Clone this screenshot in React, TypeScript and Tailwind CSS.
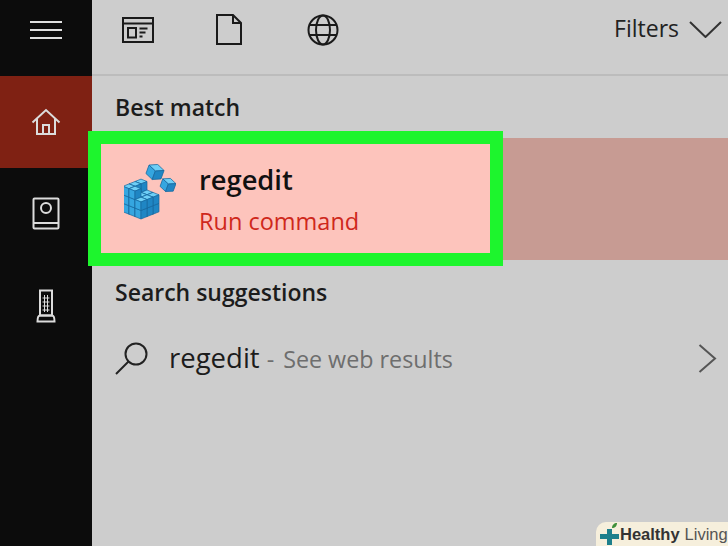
const segoe = { fontFamily: '"Open Sans", "Noto Sans", sans-serif' };

const blockCubes = (() => {
  const out: { i: number; j: number; k: number }[] = [];
  for (let sum = 4; sum >= 0; sum--) {
    for (let i = 2; i >= 0; i--) {
      const j = sum - i;
      if (j < 0 || j > 2) continue;
      for (let k = 0; k < 3; k++) {
        if (k === 2 && j < 2 && i !== 0) continue;
        if (k === 2 && i === 0 && j === 0) continue;
        out.push({ i, j, k });
      }
    }
  }
  return out;
})();

const Cube = ({ x, y, a, b, h }: { x: number; y: number; a: number; b: number; h: number }) => (
  <g stroke="#17689f" strokeWidth="0.7" strokeLinejoin="round">
    <polygon points={`${x},${y - h} ${x + a},${y - h - b} ${x},${y - h - 2 * b} ${x - a},${y - h - b}`} fill="#6ecff6" />
    <polygon points={`${x},${y} ${x},${y - h} ${x - a},${y - h - b} ${x - a},${y - b}`} fill="#35a6e0" />
    <polygon points={`${x},${y} ${x},${y - h} ${x + a},${y - h - b} ${x + a},${y - b}`} fill="#1f86c4" />
  </g>
);

const RegistryIcon = () => (
  <svg width="52" height="56" viewBox="0 0 52 56">
    {blockCubes.map(({ i, j, k }) => (
      <Cube key={`${i}-${j}-${k}`} x={17 + (i - j) * 6} y={55 - (i + j) * 2.4 - k * 8.5} a={6} b={2.4} h={8.5} />
    ))}
    <g transform="rotate(20 31 8)">
      <Cube x={31} y={16} a={8} b={3.5} h={9} />
    </g>
    <g transform="rotate(20 44 21)">
      <Cube x={44} y={28} a={7} b={3} h={8} />
    </g>
  </svg>
);

const App = () => (
  <div className="relative flex h-[546px] w-[728px] overflow-hidden bg-[#cdcdcd]" style={segoe}>
    <aside className="flex w-[92px] shrink-0 flex-col bg-[#0c0c0c] text-[#dcdcdc]">
      <div className="flex h-[76px] items-start justify-center pt-[21px]">
        <div className="flex w-[32px] flex-col gap-[6px]">
          <div className="h-[2px] bg-[#e0e0e0]" />
          <div className="h-[2px] bg-[#e0e0e0]" />
          <div className="h-[2px] bg-[#e0e0e0]" />
        </div>
      </div>
      <div className="flex h-[92px] items-center justify-center bg-[#7f2113]">
        <svg width="30" height="30" viewBox="0 0 30 30" fill="none" stroke="currentColor" strokeWidth="2">
          <path d="M1.5 15.5 15 3l13.5 12.5" />
          <path d="M6 12v15h18V12" />
          <path d="M12 27v-9h6v9" />
        </svg>
      </div>
      <div className="flex h-[92px] items-center justify-center">
        <svg width="28" height="34" viewBox="0 0 28 34" fill="none" stroke="currentColor" strokeWidth="2">
          <rect x="1.5" y="1.5" width="25" height="30" rx="1" />
          <circle cx="14" cy="11" r="5" />
          <path d="M1.5 26h25" />
        </svg>
      </div>
      <div className="flex h-[92px] items-center justify-center">
        <svg width="20" height="34" viewBox="0 0 20 34" fill="none" stroke="currentColor" strokeWidth="2">
          <rect x="4" y="1.500" width="12" height="25" />
          <path d="M1.500 32.500c0-3 1-6 2.500-6h12c1.500 0 2.500 3 2.500 6z" />
          <path d="M6.500 9h7M6.500 13h7M6.500 17h7M6.500 21h7M8.500 6v17M11.500 6v17" strokeWidth="1" />
        </svg>
      </div>
    </aside>

    <main className="flex min-w-0 flex-1 flex-col">
      <header className="flex h-[76px] shrink-0 items-center border-b-2 border-[#bcbcbc] pb-[15px] text-[#1a1a1a]">
        <svg className="ml-[30px]" width="32" height="26" viewBox="0 0 32 26" fill="none" stroke="currentColor" strokeWidth="2">
          <rect x="1" y="1" width="30" height="24" />
          <path d="M1 6.500h30" strokeWidth="2" />
          <rect x="6" y="11" width="8" height="9.500" />
          <path d="M17.500 11.500h8M17.500 15.500h6M17.500 19.500h3" />
        </svg>
        <svg className="ml-[62px]" width="26" height="31" viewBox="0 0 26 31" fill="none" stroke="currentColor" strokeWidth="2">
          <path d="M1 1h16l8 8v21H1z" />
          <path d="M17 1v8h8" />
        </svg>
        <svg className="ml-[65px]" width="32" height="32" viewBox="0 0 32 32" fill="none" stroke="currentColor" strokeWidth="2">
          <circle cx="16" cy="16" r="14.500" />
          <ellipse cx="16" cy="16" rx="7" ry="14.500" />
          <path d="M2.500 11h27M2.500 21h27" />
        </svg>
        <span className="ml-auto mt-[-2px] text-[23px] leading-none text-[#222]">Filters</span>
        <svg className="ml-[10px] mr-[6px]" width="33" height="17" viewBox="0 0 33 17" fill="none" stroke="#333" strokeWidth="2">
          <path d="M1 1l15.500 15L32 1" />
        </svg>
      </header>

      <h2 className="mb-[14px] ml-[23px] mt-[15px] text-[23px] font-semibold leading-[33px] text-[#1c1c1c]">Best match</h2>

      <div className="relative h-[122px] shrink-0 bg-[#c79b93]">
        <div className="absolute left-[-4px] top-[-7px] flex h-[135px] w-[415px] items-center border-[13px] border-[#1df52d] bg-[#fdc4bc]">
          <div className="ml-[23px] mt-[-14px]">
            <RegistryIcon />
          </div>
          <div className="ml-[23px] mt-[2px] flex flex-col">
            <span className="text-[27.300px] font-semibold leading-[36px] text-[#111]">regedit</span>
            <span className="mt-[7px] text-[23.500px] leading-[32px] text-[#cf281b]">Run command</span>
          </div>
        </div>
      </div>

      <h2 className="ml-[23px] mt-[16px] text-[23px] font-semibold leading-[33px] text-[#1c1c1c]">Search suggestions</h2>

      <div className="mt-[31px] flex items-center pl-[23px]">
        <svg width="33" height="33" viewBox="0 0 33 33" fill="none" stroke="#222" strokeWidth="2">
          <circle cx="21" cy="12" r="10.500" />
          <path d="M13.500 19.500 1 32" />
        </svg>
        <span className="ml-[21px] text-[27.500px] leading-[36px] text-[#1c1c1c]">regedit</span>
        <span className="ml-[7px] mr-[9px] mt-[2px] text-[23.300px] leading-[32px] text-[#6e6e6e]">-</span>
        <span className="mt-[2px] text-[23.300px] leading-[32px] text-[#6e6e6e]">See web results</span>
        <svg className="ml-auto mr-[11px]" width="19" height="29" viewBox="0 0 19 29" fill="none" stroke="#555" strokeWidth="2">
          <path d="M1.500 1 17 14.500 1.500 28" />
        </svg>
      </div>
    </main>

    <div className="absolute bottom-0 right-0 flex h-[24px] w-[132px] items-center rounded-tl-[10px] bg-[#f6efdc] pl-[3px] font-['Liberation_Sans',sans-serif] text-[16.500px] leading-none">
      <svg className="shrink-0" width="21" height="24" viewBox="0 0 21 24">
        <path d="M8 7h5v5h7v5h-7v6H8v-6H1v-5h7z" fill="#1d7f8c" />
        <path d="M13 6c0-3 2-5 5-5 0 3-2 5-5 5z" fill="#3f8f3a" />
      </svg>
      <span className="font-bold text-[#333]">Healthy</span>
      <span className="ml-[5px] text-[#555]">Living</span>
    </div>
  </div>
);

export default App;
